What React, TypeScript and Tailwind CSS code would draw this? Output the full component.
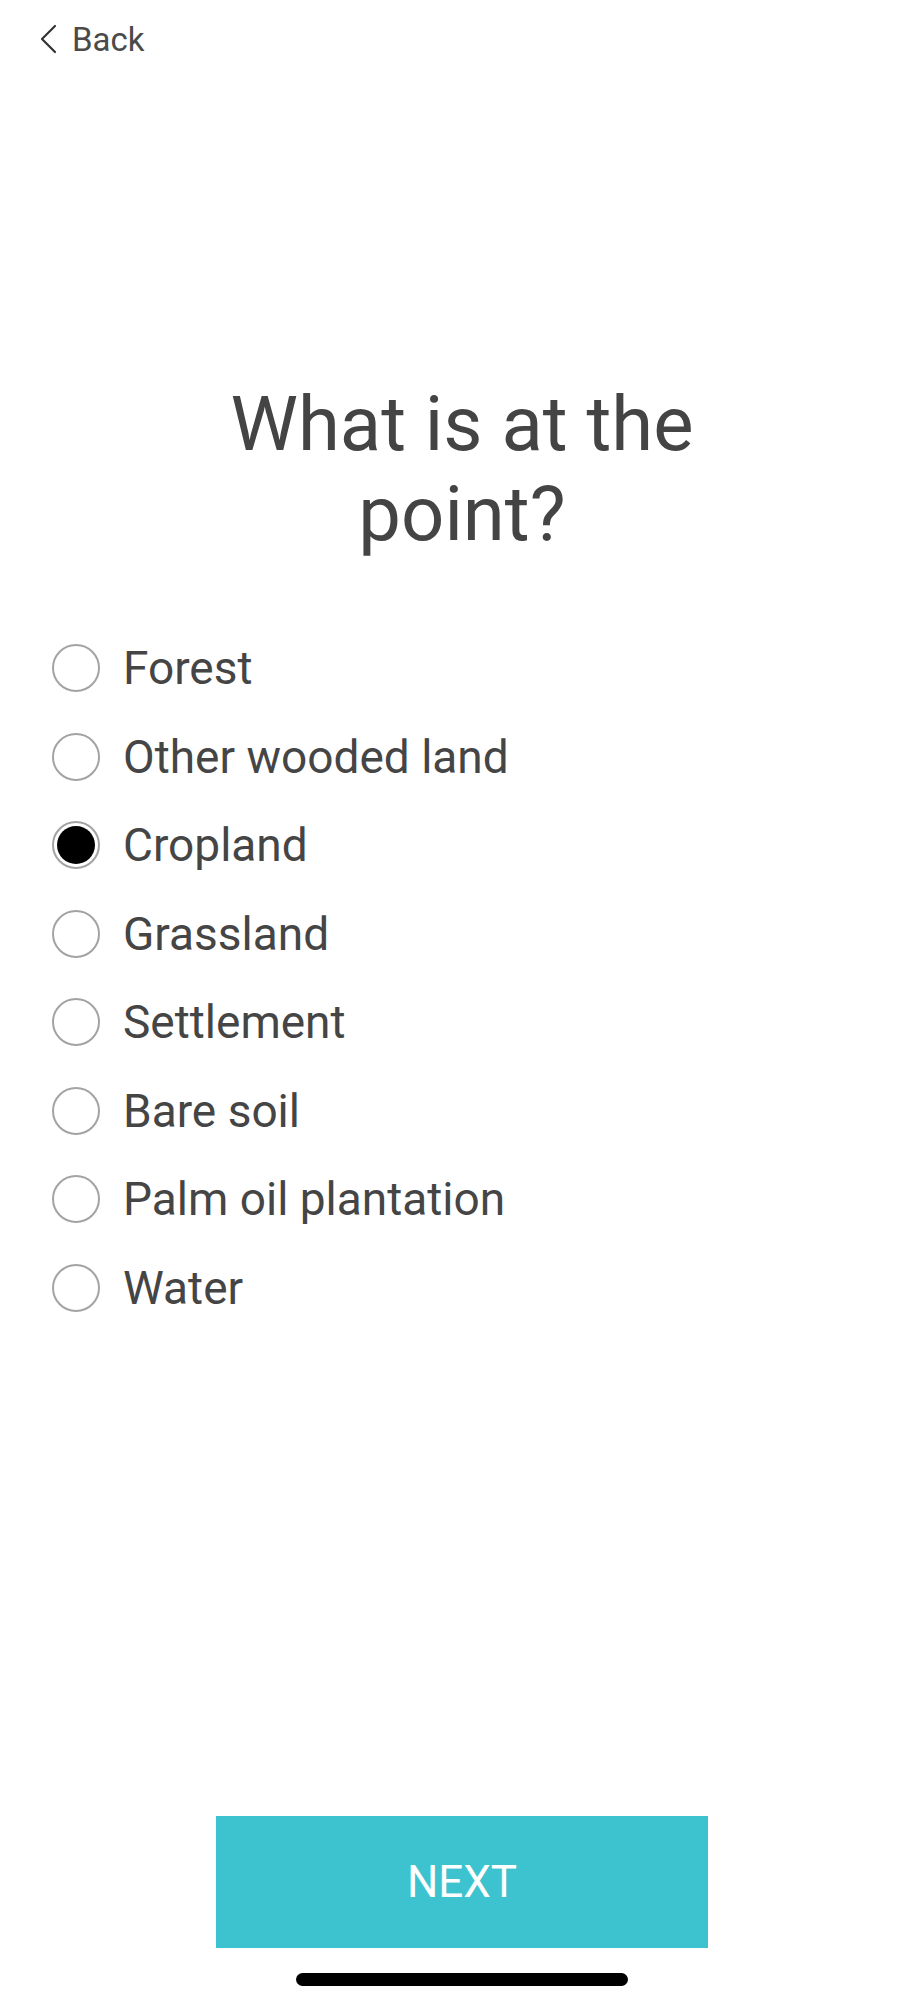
import React, { useState } from "react";

const options = [
  "Forest",
  "Other wooded land",
  "Cropland",
  "Grassland",
  "Settlement",
  "Bare soil",
  "Palm oil plantation",
  "Water",
];

export default function App() {
  const [selected, setSelected] = useState("Cropland");

  return (
    <div
      className="flex h-[2000px] w-full flex-col bg-white text-[#454545]"
      style={{ fontFamily: "Roboto, 'Liberation Sans', sans-serif" }}
    >
      {/* header */}
      <div className="flex h-[78px] items-center pl-[38px]">
        <button className="flex items-center gap-[12px] text-[33px] text-[#4a4a4a]">
          <svg width="22" height="30" viewBox="0 0 22 30" fill="none">
            <path d="M17 2 L4 15 L17 28" stroke="#333" strokeWidth="2.2" strokeLinecap="round" strokeLinejoin="round" />
          </svg>
          <span className="leading-none">Back</span>
        </button>
      </div>

      {/* question */}
      <h1 className="mt-[301px] text-center text-[76px] font-normal leading-[90px] text-[#444]">
        What is at the
        <br />
        point?
      </h1>

      {/* options */}
      <ul className="mt-[65px] flex flex-col pl-[52px]">
        {options.map((opt) => (
          <li
            key={opt}
            className="flex h-[88.5px] cursor-pointer items-center gap-[23px]"
            onClick={() => setSelected(opt)}
          >
            <span className="flex h-[48px] w-[48px] shrink-0 items-center justify-center rounded-full border-2 border-[#a3a3a3]">
              {selected === opt && <span className="h-[38px] w-[38px] rounded-full bg-black" />}
            </span>
            <span className="text-[46px] leading-none">{opt}</span>
          </li>
        ))}
      </ul>

      <div className="flex-1" />

      <div className="flex justify-center">
        <button className="flex h-[132px] w-[492px] items-center justify-center bg-[#3dc3cf] text-[44px] text-white">
          NEXT
        </button>
      </div>

      <div className="mb-[14px] mt-[25px] flex justify-center">
        <div className="h-[13px] w-[332px] rounded-full bg-black" />
      </div>
    </div>
  );
}
